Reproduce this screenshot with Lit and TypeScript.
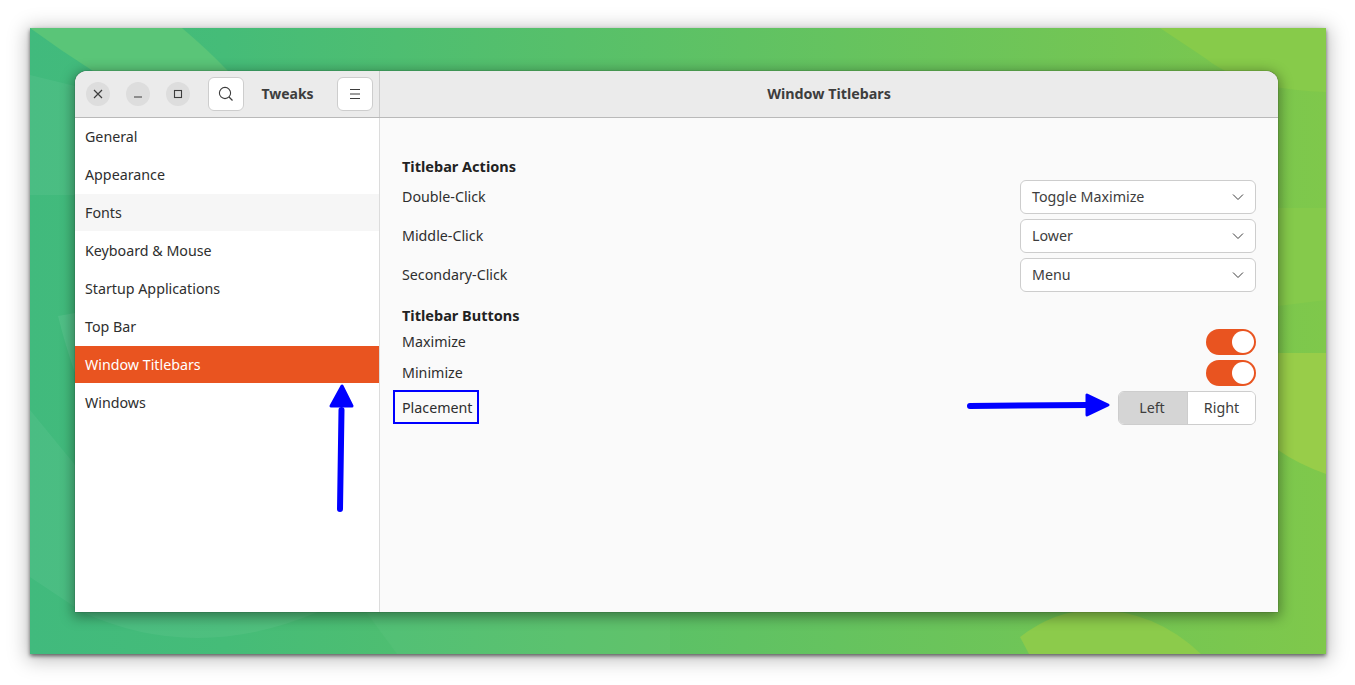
import { LitElement, html, css, svg } from "lit";
import { customElement } from "lit/decorators.js";

const NAV = ["General", "Appearance", "Fonts", "Keyboard & Mouse", "Startup Applications", "Top Bar", "Window Titlebars", "Windows"];

const chevron = html`<svg class="chev" width="12" height="8" viewBox="0 0 12 8"><path d="M1 1.5 6 6.5 11 1.5" fill="none" stroke="#3d3d3d" stroke-width="1"/></svg>`;

@customElement("app-root")
export class AppRoot extends LitElement {
  static styles = css`
    :host { display: block; width: 1355px; height: 685px; background: #fff; font-family: "Noto Sans", sans-serif; font-size: 14.25px; color: #2e2e2e; position: relative; overflow: hidden; }
    .desktop { position: absolute; left: 30px; top: 28px; width: 1296px; height: 626px; box-sizing: border-box; padding: 43px 48px 42px 45px; box-shadow: 0 2px 4px rgba(0,0,0,.55), 0 3px 18px 3px rgba(0,0,0,.25); display: flex; }
    .wall { position: absolute; inset: 0; width: 100%; height: 100%; }
    .window { position: relative; flex: 1; display: flex; flex-direction: column; background: #fafafa; border-radius: 12px 12px 0 0; box-shadow: 0 0 1px 0 rgba(0,0,0,.8), 0 3px 13px 2px rgba(0,0,0,.38); overflow: hidden; }
    .head { height: 47px; box-sizing: border-box; flex: none; display: flex; background: #ebebeb; border-bottom: 1px solid #b9b9b9; }
    .head-left { width: 305px; flex: none; box-sizing: border-box; border-right: 1px solid #cdcdcd; display: flex; align-items: center; padding-left: 11px; }
    .wbtn { width: 24px; height: 24px; border-radius: 50%; background: #dddddd; display: flex; align-items: center; justify-content: center; margin-right: 16px; flex: none; }
    .wbtn.last { margin-right: 18px; }
    .hbtn { width: 36px; height: 34px; box-sizing: border-box; background: #fff; border: 1px solid #cdcdcd; border-radius: 6px; display: flex; align-items: center; justify-content: center; flex: none; }
    .app-title { flex: none; width: 93px; box-sizing: border-box; padding: 0 6px 2px 0; text-align: center; font-weight: 700; font-size: 14px; color: #3d3d3d; }
    .head-main { flex: 1; display: flex; align-items: center; justify-content: center; padding-bottom: 2px; font-weight: 700; font-size: 14.3px; color: #3d3d3d; }
    .body { flex: 1; display: flex; min-height: 0; }
    .side { width: 305px; flex: none; box-sizing: border-box; background: #fff; border-right: 1px solid #dcdcdc; }
    .nav { height: 37px; margin-bottom: 1px; box-sizing: border-box; padding: 0 10px; display: flex; align-items: center; }
    .nav.hover { background: #f6f6f6; }
    .nav.sel { background: #e95420; color: #fff; }
    .main { flex: 1; padding: 38px 22px 0; display: flex; flex-direction: column; }
    .sec { font-weight: 700; font-size: 14.5px; height: 20px; padding-bottom: 2px; display: flex; align-items: center; color: #222; }
    .row { display: flex; align-items: center; justify-content: space-between; }
    .row > span, .drop > span, .seg > span { padding-bottom: 2px; box-sizing: border-box; }
    .r-drop { height: 34px; margin-top: 5px; }
    .r-drop.first { margin-top: 2px; }
    .drop { width: 236px; height: 34px; box-sizing: border-box; background: #fff; border: 1px solid #cdcdcd; border-radius: 6px; display: flex; align-items: center; justify-content: space-between; padding: 0 11px; color: #3d3d3d; }
    .sec.second { margin-top: 13px; }
    .r-sw { height: 26px; margin-top: 5px; }
    .r-sw.first { margin-top: 2px; }
    .sw { width: 50px; height: 26px; border-radius: 13px; background: #e95420; position: relative; }
    .knob { position: absolute; right: 2px; top: 2px; width: 22px; height: 22px; border-radius: 50%; background: #fff; }
    .r-seg { height: 34px; margin-top: 5px; }
    .place { box-sizing: border-box; height: 34px; margin-left: -9px; margin-top: -2px; padding: 0 5px 0 7px; display: flex; align-items: center; border: 2px solid #0000ff; }
    .seg { width: 138px; height: 34px; box-sizing: border-box; border: 1px solid #cdcdcd; border-radius: 6px; display: flex; overflow: hidden; color: #3d3d3d; }
    .seg span { display: flex; align-items: center; justify-content: center; background: #fff; }
    .seg .on { width: 69px; padding-right: 2px; background: #d5d5d5; border-right: 1px solid #cdcdcd; }
    .seg .off { flex: 1; }
    .arrows { position: absolute; left: 0; top: 0; width: 1355px; height: 685px; pointer-events: none; }
  `;

  render() {
    return html`
      <div class="desktop">
        <svg class="wall" viewBox="0 0 1296 626" preserveAspectRatio="none">
          <defs>
            <linearGradient id="g" x1="0" y1="0" x2="1" y2="0">
              <stop offset="0" stop-color="#41ba7d"/>
              <stop offset="0.15" stop-color="#45bc78"/>
              <stop offset="0.55" stop-color="#60c263"/>
              <stop offset="1" stop-color="#7fc84b"/>
            </linearGradient>
          </defs>
          <rect width="1296" height="626" fill="url(#g)"/>
          ${svg`
            <path d="M0 0H152Q178 22 198 43H63Q30 22 0 0Z" fill="#5ac578"/>
            <path d="M0 47 45 58V167L0 167Z" fill="#fff" opacity=".05"/>
            <path d="M1130 0H1296V64Q1215 62 1175 30Z" fill="#87cb4a"/>
            <path d="M1248 180H1296V272L1248 278Z" fill="#85ca4b"/>
            <path d="M1248 325H1296V446Q1268 436 1248 422Z" fill="#98cd49"/>
            <path d="M28 288 45 285V345Q36 320 28 288Z" fill="#fff" opacity=".08"/>
            <path d="M0 382 45 437V579L0 549Z" fill="#fff" opacity=".05"/>
            <path d="M52 584Q165 636 288 584Z" fill="#fff" opacity=".05"/>
            <path d="M336 584 367 626H640V584Z" fill="#fff" opacity=".03"/>
            <path d="M999 626 990 609Q1025 582 1064 582 1125 582 1171 626Z" fill="#8ccb4b"/>
          `}
        </svg>
        <div class="window">
          <div class="head">
            <div class="head-left">
              <div class="wbtn"><svg width="12" height="12" viewBox="0 0 12 12"><path d="M2 2 10 10M10 2 2 10" stroke="#3d3d3d" stroke-width="1.2" fill="none"/></svg></div>
              <div class="wbtn"><svg width="12" height="12" viewBox="0 0 12 12"><path d="M2 9H10" stroke="#3d3d3d" stroke-width="1.2" fill="none"/></svg></div>
              <div class="wbtn last"><svg width="12" height="12" viewBox="0 0 12 12"><rect x="2.5" y="2.5" width="7" height="7" stroke="#3d3d3d" stroke-width="1.1" fill="none"/></svg></div>
              <div class="hbtn"><svg width="16" height="16" viewBox="0 0 16 16"><circle cx="7" cy="7" r="5.6" stroke="#3d3d3d" stroke-width="1.1" fill="none"/><path d="M11 11 14.5 14.5" stroke="#3d3d3d" stroke-width="1.3" fill="none"/></svg></div>
              <div class="app-title">Tweaks</div>
              <div class="hbtn"><svg width="12" height="12" viewBox="0 0 12 12"><path d="M1 1.5H11M1 6H11M1 10.5H11" stroke="#3d3d3d" stroke-width="1.1" fill="none"/></svg></div>
            </div>
            <div class="head-main">Window Titlebars</div>
          </div>
          <div class="body">
            <div class="side">
              ${NAV.map((n) => html`<div class="nav ${n === "Fonts" ? "hover" : ""} ${n === "Window Titlebars" ? "sel" : ""}">${n}</div>`)}
            </div>
            <div class="main">
              <div class="sec">Titlebar Actions</div>
              <div class="row r-drop first"><span>Double-Click</span><div class="drop"><span>Toggle Maximize</span>${chevron}</div></div>
              <div class="row r-drop"><span>Middle-Click</span><div class="drop"><span>Lower</span>${chevron}</div></div>
              <div class="row r-drop"><span>Secondary-Click</span><div class="drop"><span>Menu</span>${chevron}</div></div>
              <div class="sec second">Titlebar Buttons</div>
              <div class="row r-sw first"><span>Maximize</span><div class="sw"><div class="knob"></div></div></div>
              <div class="row r-sw"><span>Minimize</span><div class="sw"><div class="knob"></div></div></div>
              <div class="row r-seg"><div class="place">Placement</div><div class="seg"><span class="on">Left</span><span class="off">Right</span></div></div>
            </div>
          </div>
        </div>
      </div>
      <svg class="arrows" viewBox="0 0 1355 685">
        <path d="M340 509 341.5 410" stroke="#0000ff" stroke-width="6" stroke-linecap="round" fill="none"/>
        <path d="M342 386 331 406H352Z" fill="#0000ff" stroke="#0000ff" stroke-width="3" stroke-linejoin="round"/>
        <path d="M970 406 1088 405" stroke="#0000ff" stroke-width="6" stroke-linecap="round" fill="none"/>
        <path d="M1108 405 1087 395V415Z" fill="#0000ff" stroke="#0000ff" stroke-width="3" stroke-linejoin="round"/>
      </svg>
    `;
  }
}
